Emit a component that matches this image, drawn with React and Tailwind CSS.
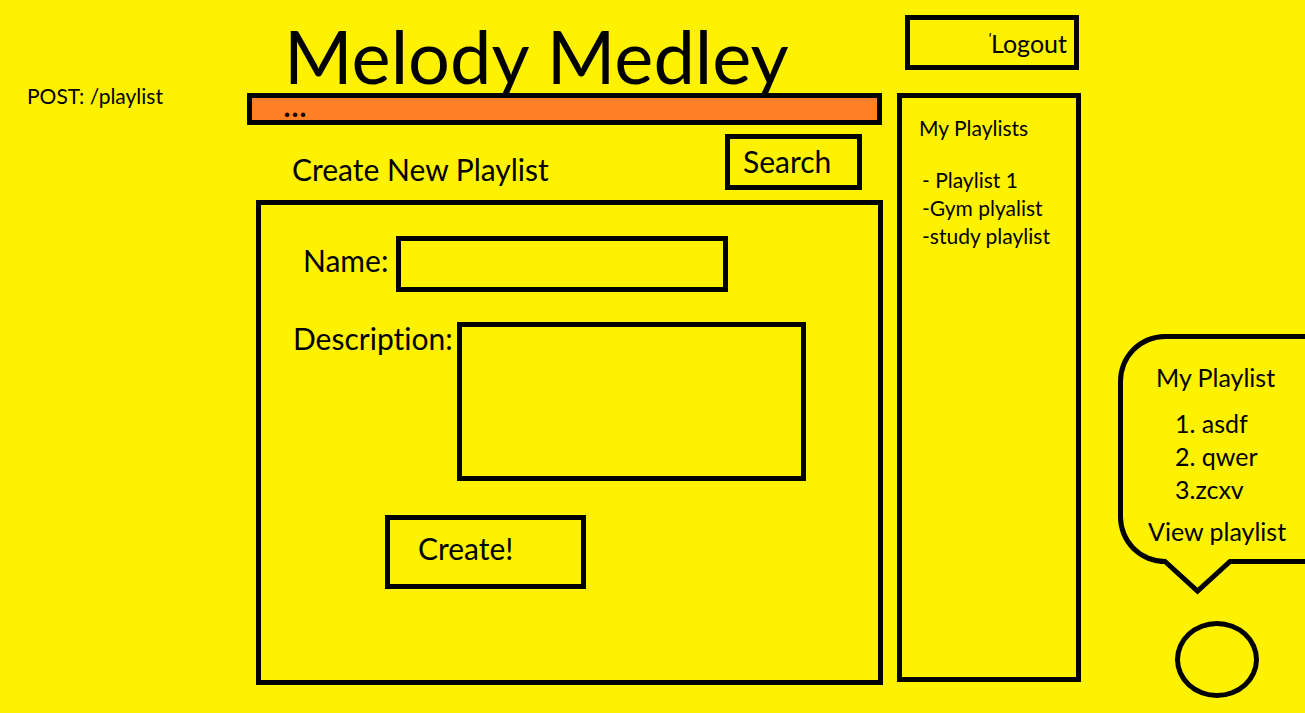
const playlists = ['- Playlist 1', '-Gym plyalist', '-study playlist'];
const songs = ['1. asdf', '2. qwer', '3.zcxv'];

function Header() {
  return (
    <header>
      <h1 className="relative z-10 h-[99px] overflow-hidden pt-3 pl-[37px] text-[74px] leading-[88px] whitespace-nowrap">
        Melody Medley
      </h1>
      <div className="-mt-[6px] h-8 border-5 border-black bg-[#ff7f27] pl-[31px] text-[34px] leading-[11px]">
        ...
      </div>
    </header>
  );
}

function PlaylistForm() {
  return (
    <form
      className="-mr-px ml-[9px] mt-[10px] h-[485px] border-5 border-black pt-[31px]"
      onSubmit={(e) => e.preventDefault()}
    >
      <div className="flex pl-[42px]">
        <label htmlFor="name" className="w-[93px] shrink-0 pt-1 text-[30px] leading-[40px]">
          Name:
        </label>
        <input
          id="name"
          className="h-14 w-[332px] border-5 border-black bg-transparent px-2 text-2xl outline-none"
        />
      </div>
      <div className="mt-[30px] flex pl-8">
        <label htmlFor="description" className="w-[164px] shrink-0 text-[30px] leading-8">
          Description:
        </label>
        <textarea
          id="description"
          className="h-[159px] w-[349px] resize-none border-5 border-black bg-transparent px-2 text-2xl outline-none"
        />
      </div>
      <button
        type="submit"
        className="mt-[34px] ml-[124px] h-[74px] w-[201px] border-5 border-black pb-2 pl-7 text-left text-[30px] leading-[40px]"
      >
        Create!
      </button>
    </form>
  );
}

function Sidebar() {
  return (
    <aside className="w-[184px] shrink-0 pt-[15px]">
      <button
        type="button"
        className="ml-2 flex h-[55px] w-[174px] items-center justify-end border-5 border-black pt-[2px] pr-[7px] text-[25px] leading-[33px]"
      >
        <span className="self-start pt-1 text-base italic">'</span>Logout
      </button>
      <nav className="mt-[23px] h-[589px] border-5 border-black pt-4 pl-[17px] text-[21px] leading-7 whitespace-nowrap">
        <h2>My Playlists</h2>
        <ul className="mt-6 pl-[3px]">
          {playlists.map((p) => (
            <li key={p}>
              <a href="#playlist">{p}</a>
            </li>
          ))}
        </ul>
      </nav>
    </aside>
  );
}

function PlaylistBubble() {
  return (
    <aside className="ml-[37px] w-[187px] shrink-0 pt-[334px] text-[25px] leading-[33px] whitespace-nowrap">
      <div className="relative h-[230px] rounded-l-[47px] border-5 border-r-0 border-black pt-[22px]">
        <h2 className="pl-[33px]">My Playlist</h2>
        <ol className="mt-[13px] pl-[52px]">
          {songs.map((s) => (
            <li key={s}>{s}</li>
          ))}
        </ol>
        <a href="#view" className="mt-[9px] block pl-[25px]">
          View playlist
        </a>
        <svg className="absolute top-[220px] left-[37px]" width="76" height="38" viewBox="0 0 76 38">
          <path d="M5 0H71V5L37.5 33L5 5Z" fill="#fff200" />
          <path d="M0 2.5H5L37.5 32L70 2.5H76" fill="none" stroke="#000" strokeWidth="5" />
        </svg>
      </div>
      <div className="mt-[57px] ml-[57px] h-[77px] w-[84px] rounded-[50%] border-5 border-black" />
    </aside>
  );
}

export default function App() {
  return (
    <div className="flex min-h-screen overflow-hidden bg-[#fff200] font-['Lato',sans-serif] text-black [font-variant-ligatures:none]">
      <p className="w-[247px] shrink-0 pt-[82px] pl-[27px] text-[21px] leading-7">POST: /playlist</p>
      <main className="mr-[15px] min-w-[635px] flex-1">
        <Header />
        <div className="mt-[9px] flex justify-between pr-5 pl-[45px]">
          <h2 className="pt-[15px] text-[30px] leading-[40px]">Create New Playlist</h2>
          <button
            type="button"
            className="h-14 w-[137px] border-5 border-black pb-[2px] pl-[13px] text-left text-[30px] leading-[40px]"
          >
            Search
          </button>
        </div>
        <PlaylistForm />
      </main>
      <Sidebar />
      <PlaylistBubble />
    </div>
  );
}
